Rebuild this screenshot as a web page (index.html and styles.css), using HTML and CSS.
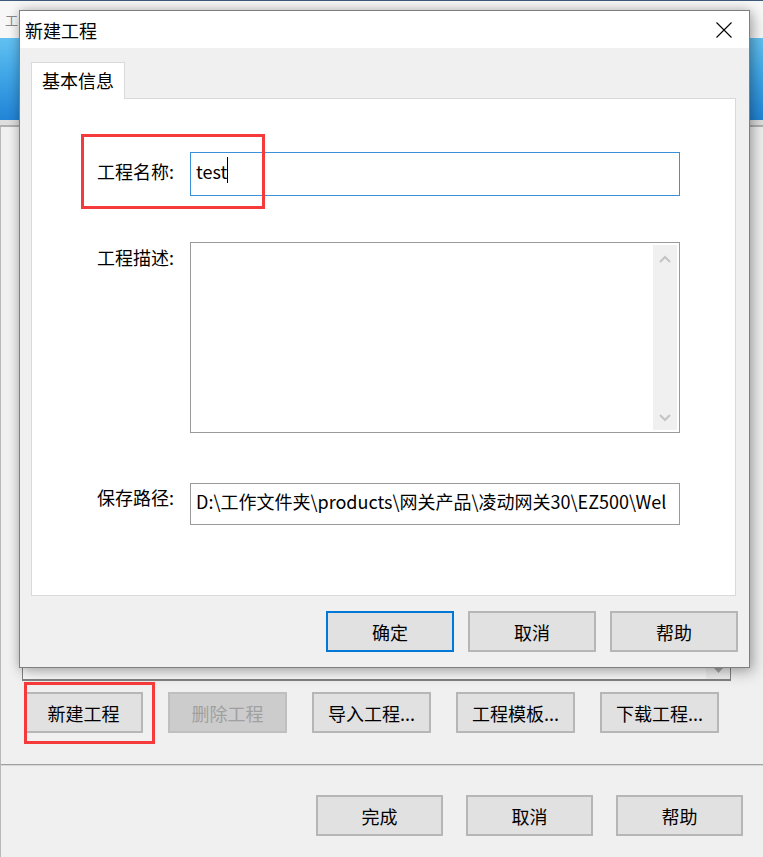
FILE: index.html
```html
<!DOCTYPE html>
<html lang="zh-CN">
<head>
<meta charset="utf-8">
<title>新建工程</title>
<link rel="stylesheet" href="styles.css">
</head>
<body>
<div class="bgwin">
  <div class="bg-title"><span class="bg-title-text">工</span></div>
  <div class="bg-banner"></div>
  <div class="bg-band"></div>
  <div class="bg-main">
    <div class="listbox">
      <div class="list-body"></div>
      <div class="list-scroll">
        <svg class="list-arrow" width="9" height="6" viewBox="0 0 9 6"><path d="M0 0h9L4.5 5z" fill="#a8a8a8"/></svg>
      </div>
    </div>
    <div class="proj-buttons">
      <div class="btn btn-proj">新建工程</div>
      <div class="btn btn-proj btn-disabled">删除工程</div>
      <div class="btn btn-proj">导入工程...</div>
      <div class="btn btn-proj">工程模板...</div>
      <div class="btn btn-proj">下载工程...</div>
    </div>
    <div class="separator"></div>
    <div class="finish-buttons">
      <div class="btn btn-finish">完成</div>
      <div class="btn btn-finish">取消</div>
      <div class="btn btn-finish">帮助</div>
    </div>
  </div>
</div>

<div class="dialog">
  <div class="dlg-title">
    <span class="dlg-title-text">新建工程</span>
    <svg class="close" width="16" height="16" viewBox="0 0 16 16"><path d="M0.5 0.5L15.5 15.5M15.5 0.5L0.5 15.5" stroke="#000" stroke-width="1.1" fill="none"/></svg>
  </div>
  <div class="dlg-body">
    <div class="tab">基本信息</div>
    <div class="panel">
      <div class="row row-name">
        <div class="label label-name">工程名称:</div>
        <div class="field field-focus">test<span class="caret"></span></div>
      </div>
      <div class="row row-desc">
        <div class="label label-desc">工程描述:</div>
        <div class="textarea">
          <div class="textarea-body"></div>
          <div class="vscroll">
            <svg width="12" height="8" viewBox="0 0 12 8"><path d="M1 7L6 2L11 7" stroke="#c4c4c4" stroke-width="2" fill="none"/></svg>
            <svg width="12" height="8" viewBox="0 0 12 8"><path d="M1 1L6 6L11 1" stroke="#c4c4c4" stroke-width="2" fill="none"/></svg>
          </div>
        </div>
      </div>
      <div class="row row-path">
        <div class="label label-path">保存路径:</div>
        <div class="field field-path">D:\工作文件夹\products\网关产品\凌动网关30\EZ500\Wel</div>
      </div>
    </div>
    <div class="dlg-buttons">
      <div class="btn btn-dlg btn-default">确定</div>
      <div class="btn btn-dlg">取消</div>
      <div class="btn btn-dlg">帮助</div>
    </div>
  </div>
</div>

<div class="mark mark-name"></div>
<div class="mark mark-new"></div>
</body>
</html>
```
FILE: styles.css
```css
html, body {
  margin: 0;
  padding: 0;
}
body {
  width: 763px;
  height: 857px;
  overflow: hidden;
  position: relative;
  background: #f0f0f0;
  font-family: "Noto Sans CJK SC", "Microsoft YaHei", sans-serif;
  font-size: 18px;
  color: #000;
}

/* background window */
.bgwin {
  display: flex;
  flex-direction: column;
  height: 857px;
}
.bg-title {
  height: 38px;
  box-sizing: border-box;
  border-top: 1px solid #3e5a7a;
  background: #f7f7f7;
  display: flex;
  align-items: center;
  padding-left: 5px;
}
.bg-title-text {
  font-size: 13px;
  color: #8a8a8a;
}
.bg-banner {
  height: 82px;
  background: linear-gradient(180deg, #62c1f1 0%, #40a6e6 45%, #2184d6 100%);
}
.bg-band {
  height: 7px;
  box-sizing: border-box;
  background: #dedede;
  border-bottom: 2px solid #b0b0b0;
}
.bg-main {
  flex: 1;
  border-left: 1px solid #b8b8b8;
  display: flex;
  flex-direction: column;
}
.listbox {
  margin-top: 10px;
  margin-left: 21px;
  width: 709px;
  height: 544px;
  box-sizing: border-box;
  border: 1px solid #828282;
  border-bottom-width: 2px;
  background: #fafafa;
  display: flex;
}
.list-body {
  flex: 1;
}
.list-scroll {
  width: 24px;
  background: #f0f0f0;
  display: flex;
  align-items: flex-end;
  justify-content: center;
  padding-bottom: 5px;
  box-sizing: border-box;
}
.proj-buttons {
  margin-top: 11px;
  padding-left: 23px;
  display: flex;
  gap: 25px;
}
.separator {
  margin-top: 31px;
  height: 2px;
  box-sizing: border-box;
  border-top: 1px solid #a0a0a0;
  border-bottom: 1px solid #d8d8d8;
}
.finish-buttons {
  margin-top: 29px;
  display: flex;
  justify-content: flex-end;
  gap: 23px;
  padding-right: 20px;
}

/* buttons */
.btn {
  box-sizing: border-box;
  height: 41px;
  background: #e1e1e1;
  border: 2px solid #b6b6b6;
  display: flex;
  align-items: center;
  justify-content: center;
  font-size: 18px;
  color: #000;
  white-space: nowrap;
}
.btn-proj {
  width: 119px;
}
.btn-finish {
  width: 127px;
}
.btn-disabled {
  background: #cccccc;
  border-color: #bfbfbf;
  color: #a0a0a0;
}
.btn-dlg {
  width: 128px;
}
.btn-default {
  border-color: #0078d7;
}

/* dialog */
.dialog {
  position: absolute;
  left: 19px;
  top: 10px;
  width: 731px;
  height: 658px;
  box-sizing: border-box;
  border: 1px solid #7f7f7f;
  background: #f0f0f0;
  box-shadow: 0 0 10px rgba(0, 0, 0, 0.22), 4px 5px 14px rgba(0, 0, 0, 0.22);
  display: flex;
  flex-direction: column;
}
.dlg-title {
  height: 37px;
  background: #fff;
  display: flex;
  align-items: center;
  justify-content: space-between;
  padding-left: 5px;
  padding-right: 17px;
}
.dlg-title-text {
  font-size: 18px;
}
.close {
  display: block;
}
.dlg-body {
  flex: 1;
  padding: 14px 13px 0 11px;
  display: flex;
  flex-direction: column;
}
.tab {
  width: 94px;
  height: 37px;
  box-sizing: border-box;
  border: 1px solid #d9d9d9;
  border-bottom: none;
  background: #fff;
  margin-bottom: -1px;
  position: relative;
  z-index: 1;
  padding-left: 10px;
  line-height: 35px;
  font-size: 18px;
}
.panel {
  height: 498px;
  box-sizing: border-box;
  border: 1px solid #d9d9d9;
  background: #fff;
  padding-top: 53px;
  padding-left: 65px;
  display: flex;
  flex-direction: column;
}
.row {
  display: flex;
  align-items: flex-start;
}
.row-desc {
  margin-top: 46px;
}
.row-path {
  margin-top: 50px;
}
.label {
  width: 93px;
  line-height: 24px;
  font-size: 18px;
  white-space: nowrap;
}
.label-name {
  margin-top: 7px;
}
.label-desc {
  margin-top: 3px;
}
.label-path {
  margin-top: 2px;
}
.field {
  width: 490px;
  box-sizing: border-box;
  border: 1px solid #9a9a9a;
  background: #fff;
  white-space: nowrap;
  overflow: hidden;
  font-size: 18px;
}
.field-focus {
  height: 44px;
  border-color: #3c8fdb;
  padding-left: 5px;
  line-height: 36px;
}
.caret {
  display: inline-block;
  width: 1px;
  height: 26px;
  background: #000;
  vertical-align: -4px;
}
.field-path {
  height: 42px;
  padding-left: 5px;
  line-height: 34px;
}
.textarea {
  width: 490px;
  height: 191px;
  box-sizing: border-box;
  border: 1px solid #9a9a9a;
  background: #fff;
  display: flex;
}
.textarea-body {
  flex: 1;
}
.vscroll {
  width: 24px;
  margin: 2px 2px 2px 0;
  background: #f0f0f0;
  display: flex;
  flex-direction: column;
  justify-content: space-between;
  align-items: center;
  padding: 10px 0 8px;
  box-sizing: border-box;
}
.vscroll svg {
  display: block;
}
.dlg-buttons {
  margin-top: 15px;
  margin-right: -2px;
  display: flex;
  justify-content: flex-end;
  gap: 14px;
}

/* annotation marks */
.mark {
  position: absolute;
  box-sizing: border-box;
  border: 3px solid #f43a3a;
  z-index: 5;
}
.mark-name {
  left: 81px;
  top: 134px;
  width: 184px;
  height: 75px;
}
.mark-new {
  left: 24px;
  top: 682px;
  width: 131px;
  height: 62px;
}
```
